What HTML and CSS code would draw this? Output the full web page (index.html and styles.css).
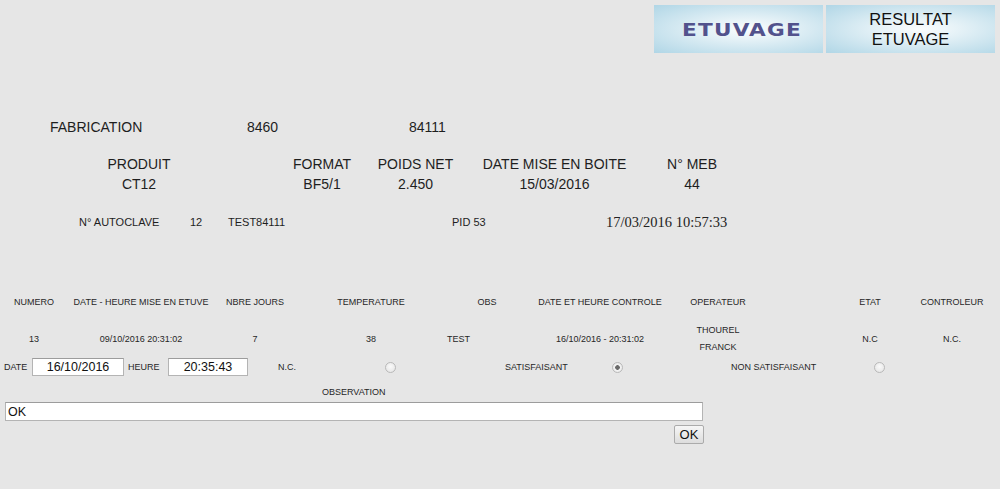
FILE: index.html
```html
<!DOCTYPE html>
<html lang="fr">
<head>
  <meta charset="UTF-8" />
  <title>Résultat étuvage</title>
  <link rel="stylesheet" href="styles.css">
</head>
<body>
  <div class="top">
    <a class="tab tab-logo" href="#"><span>ETUVAGE</span></a>
    <a class="tab tab-text" href="#">RESULTAT<br>ETUVAGE</a>
  </div>

  <div class="fab">
    <span class="fab-label">FABRICATION</span>
    <span class="fab-num">8460</span>
    <span>84111</span>
  </div>

  <div class="produit">
    <div class="col col-produit"><div>PRODUIT</div><div>CT12</div></div>
    <div class="col col-format"><div>FORMAT</div><div>BF5/1</div></div>
    <div class="col col-poids"><div>POIDS NET</div><div>2.450</div></div>
    <div class="col col-date"><div>DATE MISE EN BOITE</div><div>15/03/2016</div></div>
    <div class="col col-meb"><div>N° MEB</div><div>44</div></div>
  </div>

  <div class="autoclave">
    <span class="ac-label">N° AUTOCLAVE</span>
    <span class="ac-num">12</span>
    <span class="ac-test">TEST84111</span>
    <span class="ac-pid">PID 53</span>
    <span class="ac-time">17/03/2016 10:57:33</span>
  </div>

  <div class="grid grid-head">
    <div>NUMERO</div>
    <div>DATE - HEURE MISE EN ETUVE</div>
    <div>NBRE JOURS</div>
    <div>TEMPERATURE</div>
    <div>OBS</div>
    <div>DATE ET HEURE CONTROLE</div>
    <div>OPERATEUR</div>
    <div class="etat">ETAT</div>
    <div>CONTROLEUR</div>
  </div>
  <div class="grid grid-row">
    <div>13</div>
    <div>09/10/2016 20:31:02</div>
    <div>7</div>
    <div>38</div>
    <div class="left">TEST</div>
    <div>16/10/2016 - 20:31:02</div>
    <div class="twoline">THOUREL<br>FRANCK</div>
    <div class="etat">N.C</div>
    <div>N.C.</div>
  </div>

  <form class="controle">
    <div class="line">
      <label class="lbl-date">DATE</label>
      <input class="field f-date" type="text" value="16/10/2016">
      <label class="lbl-heure">HEURE</label>
      <input class="field f-heure" type="text" value="20:35:43">
      <label class="lbl-nc">N.C.</label>
      <input class="radio" type="radio" name="etat">
      <label class="lbl-sat">SATISFAISANT</label>
      <input class="radio" type="radio" name="etat" checked>
      <label class="lbl-nonsat">NON SATISFAISANT</label>
      <input class="radio" type="radio" name="etat">
    </div>
    <div class="obs-title">OBSERVATION</div>
    <input class="obs" type="text" value="OK">
    <div class="actions">
      <button type="submit" class="ok">OK</button>
    </div>
  </form>
</body>
</html>
```

FILE: styles.css
```css
body {
  margin: 0;
  font-family: Arial, 'Liberation Sans', sans-serif;
  background: #e6e6e6;
  color: #1e1e1e;
}

.top {
  display: flex;
  justify-content: flex-end;
  gap: 3px;
  padding: 5px 5px 0 0;
  height: 48px;
}

.tab {
  width: 169px;
  height: 48px;
  display: flex;
  align-items: center;
  justify-content: center;
  text-align: center;
  text-decoration: none;
  background: radial-gradient(ellipse at 55% 50%, #fbfdfe 0%, #e6f2f7 30%, #b0d6e6 100%);
}

.tab-logo span {
  display: inline-block;
  font-family: 'DejaVu Sans', sans-serif;
  font-weight: bold;
  font-size: 18px;
  letter-spacing: 1px;
  color: #52528c;
  transform: scaleX(1.2);
  margin-left: 6px;
}

.tab-text {
  font-size: 16.5px;
  line-height: 20px;
  color: #111;
}

.fab {
  margin-top: 66px;
  padding-left: 50px;
  display: flex;
  font-size: 14px;
  line-height: 16px;
}

.fab-label {
  width: 197px;
}

.fab-num {
  width: 162px;
}

.produit {
  margin-top: 19px;
  padding-left: 40px;
  display: flex;
  font-size: 14px;
  line-height: 20px;
}

.col {
  text-align: center;
}

.col-produit { width: 198px; margin-right: 42px; }
.col-format { width: 84px; }
.col-poids { width: 103px; }
.col-date { width: 175px; }
.col-meb { width: 100px; }

.autoclave {
  margin-top: 20px;
  padding-left: 79px;
  display: flex;
  align-items: center;
  height: 16px;
  font-size: 11px;
}

.ac-label { width: 111px; }
.ac-num { width: 38px; }
.ac-test { width: 224px; }
.ac-pid { width: 154px; }

.ac-time {
  font-family: 'Liberation Serif', 'Times New Roman', serif;
  font-size: 14.5px;
  color: #222;
}

.grid {
  display: grid;
  grid-template-columns: 68px 146px 82px 150px 82px 144px 92px 146px 84px;
  font-size: 9px;
  text-align: center;
  color: #262626;
}

.grid-head {
  margin-top: 66px;
  line-height: 12px;
}

.grid-row {
  margin-top: 14px;
  align-items: center;
  line-height: 17px;
}

.grid .etat {
  padding-left: 66px;
}

.grid .left {
  text-align: left;
  padding-left: 1px;
}

.controle {
  margin: 2px 0 0;
  font-size: 9px;
}

.line {
  display: flex;
  align-items: center;
  height: 18px;
  padding-left: 4px;
}

.line > * {
  flex: none;
}

.line label {
  color: #262626;
}

.lbl-date { width: 28px; }
.lbl-heure { width: 40px; margin-left: 4px; }
.lbl-nc { width: 107px; margin-left: 30px; }
.lbl-sat { width: 107px; margin-left: 109px; }
.lbl-nonsat { width: 143px; margin-left: 108px; }

.field {
  box-sizing: border-box;
  height: 18px;
  margin: 0;
  padding: 0 2px;
  border: 1px solid #b4b4b4;
  border-top-color: #9c9c9c;
  background: #fff;
  font-family: Arial, 'Liberation Sans', sans-serif;
  font-size: 12.5px;
  color: #111;
  text-align: center;
}

.f-date { width: 92px; }
.f-heure { width: 80px; }

.radio {
  appearance: none;
  box-sizing: border-box;
  width: 11px;
  height: 11px;
  margin: 0;
  border: 1px solid #b9b9b9;
  border-radius: 50%;
  background: radial-gradient(circle at 50% 40%, #fafafa, #e2e2e2);
}

.radio:checked {
  background: radial-gradient(circle, #6a6a6a 0, #6a6a6a 2px, #f4f4f4 2.6px, #e2e2e2 100%);
}

.obs-title {
  margin-top: 10px;
  line-height: 12px;
  padding-left: 322px;
  color: #262626;
}

.obs {
  display: block;
  box-sizing: border-box;
  margin: 4px 0 0 5px;
  width: 698px;
  height: 19px;
  padding: 0 2px;
  border: 1px solid #b4b4b4;
  border-top-color: #9c9c9c;
  background: #fff;
  font-family: Arial, 'Liberation Sans', sans-serif;
  font-size: 12.5px;
  color: #111;
}

.actions {
  display: flex;
  justify-content: flex-end;
  width: 704px;
  margin-top: 4px;
}

.ok {
  height: 19px;
  width: 30px;
  padding: 0;
  border: 1px solid #ababab;
  border-radius: 2px;
  background: linear-gradient(#f6f6f6, #dddddd);
  font-family: Arial, 'Liberation Sans', sans-serif;
  font-size: 13px;
  color: #111;
}
```
